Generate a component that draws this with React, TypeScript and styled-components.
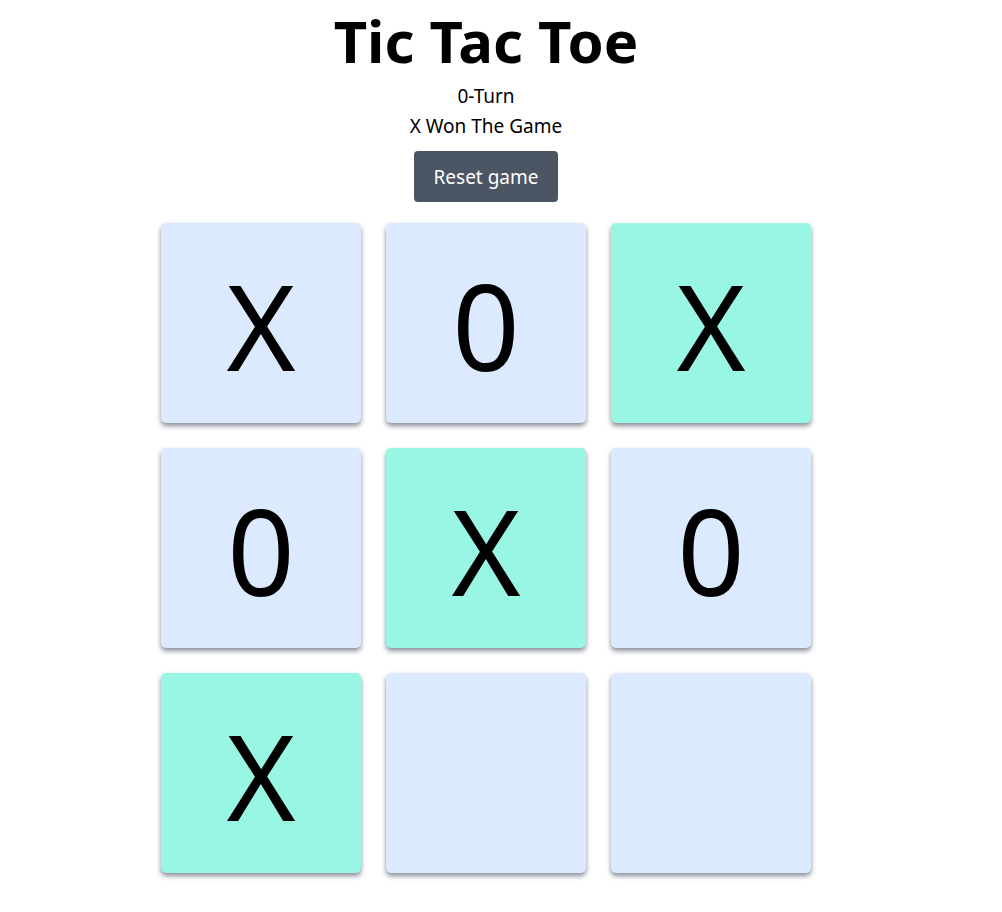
import * as React from 'react';
import styled, { createGlobalStyle } from 'styled-components';

const DocStyle = createGlobalStyle`
  html,
  body {
    margin: 0;
    background: #ffffff;
    color: #000000;
    font-family: 'Noto Sans', 'Open Sans', sans-serif;
  }
`;

const Page = styled.div`
  width: 972px;
  display: flex;
  flex-direction: column;
  align-items: center;
  padding: 12px 0 24px;
`;

const Title = styled.h1`
  margin: 0;
  font-size: 58px;
  line-height: 58px;
  font-weight: 700;
`;

const Status = styled.p`
  margin: 0;
  font-size: 19px;
  line-height: 30px;
`;

const TurnLine = styled(Status)`
  margin-top: 11px;
`;

const ResetButton = styled.button`
  margin-top: 10px;
  width: 144px;
  height: 51px;
  border: none;
  border-radius: 4px;
  background: #4b5563;
  color: #ffffff;
  font-family: inherit;
  font-size: 19px;
  cursor: pointer;
`;

const Board = styled.div`
  margin-top: 21px;
  display: grid;
  grid-template-columns: repeat(3, 200px);
  grid-auto-rows: 200px;
  gap: 25px;
`;

const Tile = styled.button<{ $win: boolean }>`
  display: flex;
  align-items: center;
  justify-content: center;
  padding: 6px 0 0;
  border: none;
  border-radius: 5px;
  background: ${p => (p.$win ? '#99f6e4' : '#dbeafe')};
  box-shadow: 0 3px 5px rgba(55, 65, 81, 0.6);
  color: #000000;
  font-family: inherit;
  font-size: 118px;
  line-height: 1;
  cursor: pointer;
`;

const cells = ['X', '0', 'X', '0', 'X', '0', 'X', '', ''];
const winning = [2, 4, 6];

export default function App() {
  return (
    <>
      <DocStyle />
      <Page>
        <Title>Tic Tac Toe</Title>
        <TurnLine>0-Turn</TurnLine>
        <Status>X Won The Game</Status>
        <ResetButton>Reset game</ResetButton>
        <Board>
          {cells.map((c, i) => (
            <Tile key={i} $win={winning.includes(i)}>
              {c}
            </Tile>
          ))}
        </Board>
      </Page>
    </>
  );
}
